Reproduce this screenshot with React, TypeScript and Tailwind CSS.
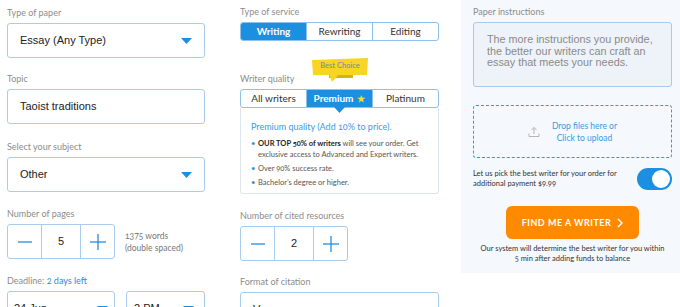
import React from 'react';

const BLUE = '#1d8fe1';

function Caret() {
  return (
    <svg width="11" height="6" viewBox="0 0 11 6" className="shrink-0">
      <polygon points="0,0 11,0 5.5,6" fill={BLUE} />
    </svg>
  );
}

function Label({ children }: { children: React.ReactNode }) {
  return <div className="h-[14px] leading-[14px] text-[9px] text-[#8c8c8c] mb-[3px]">{children}</div>;
}

function SelectBox({ value }: { value: string }) {
  return (
    <div className="h-[35px] flex items-center justify-between border border-[#a9cbec] rounded-[3px] bg-white pl-[12px] pr-[12px]">
      <span className="font-['Liberation_Sans',Arial,sans-serif] text-[11px] text-[#222]">{value}</span>
      <Caret />
    </div>
  );
}

function Stepper({ value }: { value: number }) {
  return (
    <div className="flex h-[35px] w-[108px] border border-[#a9cbec] rounded-[3px] bg-white">
      <div className="w-[34px] flex items-center justify-center border-r border-[#a9cbec]">
        <svg width="14" height="14" viewBox="0 0 14 14">
          <line x1="0" y1="7" x2="14" y2="7" stroke={BLUE} strokeWidth="1.3" />
        </svg>
      </div>
      <div className="w-[39px] flex items-center justify-center font-['Liberation_Sans',Arial,sans-serif] text-[11px] text-[#222] border-r border-[#a9cbec]">
        {value}
      </div>
      <div className="flex-1 flex items-center justify-center">
        <svg width="16" height="16" viewBox="0 0 16 16">
          <line x1="0" y1="8" x2="16" y2="8" stroke={BLUE} strokeWidth="1.3" />
          <line x1="8" y1="0" x2="8" y2="16" stroke={BLUE} strokeWidth="1.3" />
        </svg>
      </div>
    </div>
  );
}

function Segmented({ items, active }: { items: string[]; active: number }) {
  return (
    <div className="flex h-[19px] border border-[#8fc0ea] rounded-[3px] overflow-hidden bg-white">
      {items.map((it, i) => (
        <div
          key={it}
          className={`flex-1 flex items-center justify-center text-[10px] ${
            i === active ? 'bg-[#1d8fe1] text-white font-bold' : 'text-[#333]'
          } ${i > 0 ? 'border-l border-[#8fc0ea]' : ''}`}
        >
          {it}
          {it === 'Premium' && <span className="ml-[4px] text-[#ffd633] text-[9px] leading-none">★</span>}
        </div>
      ))}
    </div>
  );
}

function Bullet({ children, className }: { children: React.ReactNode; className?: string }) {
  return (
    <li className={`flex ${className ?? ''}`}>
      <span className="w-[7px] shrink-0 text-[#1d8fe1]">•</span>
      <span>{children}</span>
    </li>
  );
}

export default function App() {
  return (
    <div className="w-[680px] h-[307px] overflow-hidden bg-white flex items-start font-['Lato',sans-serif] oldstyle-nums">
      {/* Left column */}
      <div className="w-[198px] ml-[7px] pt-[6px] flex flex-col shrink-0">
        <Label>Type of paper</Label>
        <SelectBox value="Essay (Any Type)" />
        <div className="mt-[14px]" />
        <Label>Topic</Label>
        <div className="h-[35px] flex items-center border border-[#a9cbec] rounded-[3px] pl-[12px] font-['Liberation_Sans',Arial,sans-serif] text-[11px] text-[#222]">
          Taoist traditions
        </div>
        <div className="mt-[16px]" />
        <Label>Select your subject</Label>
        <SelectBox value="Other" />
        <div className="mt-[15px]" />
        <Label>Number of pages</Label>
        <div className="flex items-center gap-[10px]">
          <Stepper value={5} />
          <div className="text-[8.5px] leading-[12px] text-[#777]">
            1375 words
            <br />
            (double spaced)
          </div>
        </div>
        <div className="mt-[15px]" />
        <Label>
          Deadline: <span className="text-[#1d8fe1]">2 days left</span>
        </Label>
        <div className="flex gap-[11px]">
          <div className="w-[108px] h-[35px] flex items-center justify-between border border-[#a9cbec] rounded-[3px] pl-[6px] pr-[6px]">
            <span className="font-['Liberation_Sans',Arial,sans-serif] text-[11px] text-[#222]">24 Jun</span>
            <Caret />
          </div>
          <div className="flex-1 h-[35px] flex items-center justify-between border border-[#a9cbec] rounded-[3px] pl-[7px] pr-[10px]">
            <span className="font-['Liberation_Sans',Arial,sans-serif] text-[11px] text-[#222]">2 PM</span>
            <Caret />
          </div>
        </div>
      </div>

      {/* Middle column */}
      <div className="w-[199px] ml-[35px] pt-[5px] flex flex-col shrink-0">
        <Label>Type of service</Label>
        <Segmented items={['Writing', 'Rewriting', 'Editing']} active={0} />
        <div className="relative mt-[31px]">
          <div className="absolute left-[72px] top-[-14px] w-[56px] h-[26px]">
            <svg width="56" height="26" viewBox="0 0 56 26" className="absolute inset-0">
              <polygon points="17,13 41,13 41,20 17,20" fill="#dcb10c" />
              <polygon points="0,2 56,0 55,17 1,17" fill="#f8d423" />
              <polygon points="17,16 27,16 20,24" fill="#f8d423" />
            </svg>
            <div className="absolute left-0 right-0 top-[3px] text-center text-[7.5px] leading-[10px] text-[#6d8ca6]">
              Best Choice
            </div>
          </div>
          <Label>Writer quality</Label>
        </div>
        <div className="relative">
          <Segmented items={['All writers', 'Premium', 'Platinum']} active={1} />
          <svg width="11" height="6" viewBox="0 0 11 6" className="absolute left-[94px] top-[18px]">
            <polygon points="0,0 11,0 5.5,6" fill={BLUE} />
          </svg>
        </div>
        <div className="h-[86px] border border-t-0 border-[#dbe5ee] rounded-b-[3px] pl-[10px] pr-[8px] pt-[13px]">
          <div className="text-[9px] text-[#3b9be4] leading-[12px]">Premium quality (Add 10% to price).</div>
          <ul className="mt-[6px] text-[7.5px] leading-[10.5px] text-[#555]">
            <Bullet>
              <b className="text-[#222]">OUR TOP 50% of writers</b> will see your order. Get exclusive access to Advanced and Expert writers.
            </Bullet>
            <Bullet className="mt-[4px]">Over 90% success rate.</Bullet>
            <Bullet className="mt-[3px]">Bachelor’s degree or higher.</Bullet>
          </ul>
        </div>
        <div className="mt-[15px]" />
        <Label>Number of cited resources</Label>
        <Stepper value={2} />
        <div className="mt-[14px]" />
        <Label>Format of citation</Label>
        <SelectBox value="Vancouver" />
      </div>

      {/* Right panel */}
      <div className="ml-[22px] w-[219px] h-[273px] bg-[#f5f8fc] pl-[12px] pr-[8px] pt-[5px] flex flex-col shrink-0">
        <Label>Paper instructions</Label>
        <div className="h-[65px] border border-[#a9c9ea] rounded-[3px] bg-[#eef3f9] pl-[13px] pt-[11px] font-['Liberation_Sans',Arial,sans-serif] text-[10.8px] leading-[11.5px] text-[#8a8a8a]">
          The more instructions you provide,
          <br />
          the better our writers can craft an
          <br />
          essay that meets your needs.
        </div>
        <div className="mt-[18px] h-[53px] border-[1.5px] border-dashed border-[#2b9be8] rounded-[3px] flex items-center justify-center gap-[12px]">
          <svg width="12" height="12" viewBox="0 0 12 12" fill="none" stroke="#b5b5b5" strokeWidth="1">
            <path d="M6 8V1.5M3.5 4L6 1.5L8.5 4" />
            <path d="M1 7.5V10.5H11V7.5" />
          </svg>
          <div className="text-[8.5px] leading-[12px] text-[#3b9be4] text-center">
            Drop files here or
            <br />
            Click to upload
          </div>
        </div>
        <div className="mt-[10px] flex items-center justify-between">
          <div className="text-[7.5px] leading-[10px] text-[#333]">
            Let us pick the best writer for your order for
            <br />
            additional payment $9.99
          </div>
          <div className="w-[35px] h-[22px] rounded-full bg-[#1d8fe1] flex items-center justify-end pr-[2px]">
            <div className="w-[18px] h-[18px] rounded-full bg-white" />
          </div>
        </div>
        <div className="mt-[16px] flex justify-center">
          <div className="w-[133px] h-[33px] rounded-[6px] bg-[#ff8a00] flex items-center justify-center gap-[6px] text-white text-[9px] font-bold tracking-[0.5px]">
            FIND ME A WRITER
            <svg width="6" height="10" viewBox="0 0 6 10" fill="none" stroke="white" strokeWidth="1.4">
              <path d="M1 1L5 5L1 9" />
            </svg>
          </div>
        </div>
        <div className="mt-[5px] text-center text-[7.5px] leading-[9.5px] text-[#333]">
          Our system will determine the best writer for you within
          <br />5 min after adding funds to balance
        </div>
      </div>
    </div>
  );
}
